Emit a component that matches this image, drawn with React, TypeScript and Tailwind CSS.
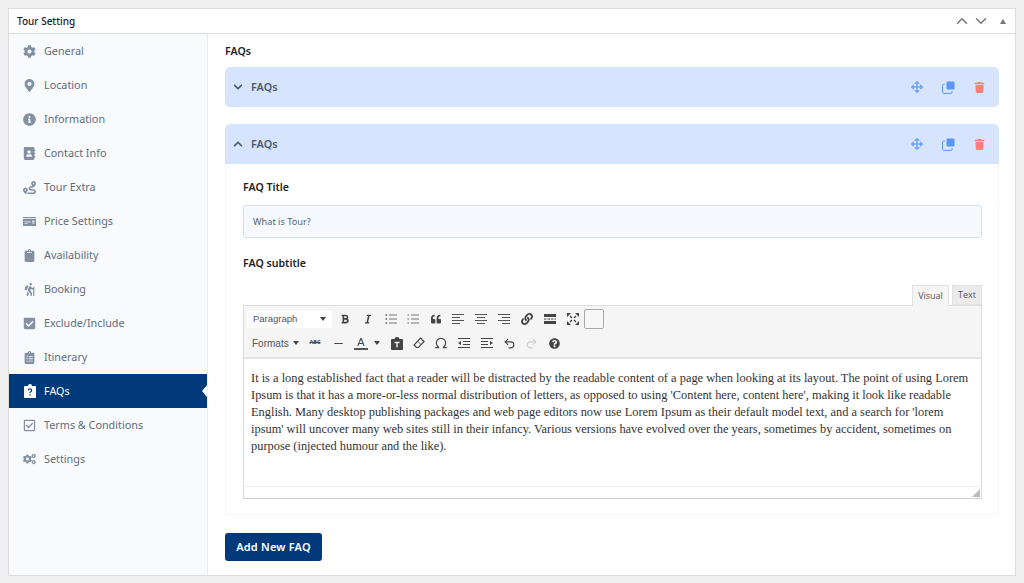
import React from "react";
import {
  FaCog, FaMapMarkerAlt, FaInfoCircle, FaAddressBook, FaMoneyCheck, FaClipboard, FaHiking,
  FaCheckSquare, FaClipboardList, FaRegCheckSquare, FaCogs, FaArrowsAlt, FaTrash, FaRoute,
  FaChevronDown, FaChevronUp, FaBold, FaItalic, FaQuoteLeft, FaLink, FaQuestionCircle,
} from "react-icons/fa";
import { ChevronUp, ChevronDown, Undo2, Redo2, Minus, Omega } from "lucide-react";

function FaqIcon() {
  return (
    <svg width="12" height="14" viewBox="0 0 12 14">
      <path d="M1.500 2H4a2 2 0 0 1 4 0h2.500A1.200 1.200 0 0 1 12 3.200v9.600a1.200 1.200 0 0 1-1.500 1.200h-9A1.200 1.200 0 0 1 0 12.800V3.200A1.200 1.200 0 0 1 1.500 2z" fill="#fff" />
      <path d="M4.400 6.400a1.600 1.600 0 1 1 2.400 1.400c-.6.4-.8.6-.8 1.200M6 10.200v1.200" fill="none" stroke="#013a76" strokeWidth="1.2" />
    </svg>
  );
}

const nav: [string, React.ReactNode][] = [
  ["General", <FaCog size={13} />],
  ["Location", <FaMapMarkerAlt size={13} />],
  ["Information", <FaInfoCircle size={13} />],
  ["Contact Info", <FaAddressBook size={13} />],
  ["Tour Extra", <FaRoute size={13} />],
  ["Price Settings", <FaMoneyCheck size={13} />],
  ["Availability", <FaClipboard size={13} />],
  ["Booking", <FaHiking size={13} />],
  ["Exclude/Include", <FaCheckSquare size={13} />],
  ["Itinerary", <FaClipboardList size={13} />],
  ["FAQs", <FaqIcon />],
  ["Terms & Conditions", <FaRegCheckSquare size={13} />],
  ["Settings", <FaCogs size={14} />],
];

function CopyIcon() {
  return (
    <svg width="13" height="13" viewBox="0 0 13 13">
      <rect x="4.500" y="0.500" width="8" height="8" rx="1" fill="#5b96f7" />
      <path d="M2.800 3.200H1.600a1 1 0 0 0-1 1v7.200a1 1 0 0 0 1 1H9a1 1 0 0 0 1-1v-1.200" fill="none" stroke="#5b96f7" strokeWidth="1" />
    </svg>
  );
}

function Lines({ kind }: { kind: "ul" | "ol" | "l" | "c" | "r" }) {
  if (kind === "ul" || kind === "ol") {
    return (
      <svg width="12" height="12" viewBox="0 0 12 12" stroke="#666" fill="none">
        {[2, 6, 10].map((y) => (
          <g key={y}>
            <path d={`M4 ${y}h8`} strokeWidth="0.9" />
            <path d={`M0.500 ${y}h1.600`} strokeWidth={kind === "ul" ? 1.6 : 1} />
          </g>
        ))}
      </svg>
    );
  }
  const rows =
    kind === "l"
      ? ["M0 1.500h12", "M0 4.500h8", "M0 7.500h12", "M0 10.500h8"]
      : kind === "c"
      ? ["M0 1.500h12", "M2 4.500h8", "M0 7.500h12", "M2 10.500h8"]
      : ["M0 1.500h12", "M4 4.500h8", "M0 7.500h12", "M4 10.500h8"];
  return (
    <svg width="12" height="12" viewBox="0 0 12 12" stroke="#555" fill="none" strokeWidth="1">
      {rows.map((d) => (
        <path key={d} d={d} />
      ))}
    </svg>
  );
}

function Indent({ flip }: { flip?: boolean }) {
  return (
    <svg width="12" height="12" viewBox="0 0 12 12" stroke="#444" fill="none" strokeWidth="1">
      <path d="M0 1.500h12M0 10.500h12" />
      {flip ? <path d="M0 4.500h7M0 7.500h7" /> : <path d="M5 4.500h7M5 7.500h7" />}
      {flip ? <path d="M9 4l3 2-3 2z" fill="#444" stroke="none" /> : <path d="M3 4L0 6l3 2z" fill="#444" stroke="none" />}
    </svg>
  );
}

function Tb({ w, children }: { w: string; children: React.ReactNode }) {
  return <span className={`flex h-5 shrink-0 items-center justify-center text-[#444] ${w}`}>{children}</span>;
}

function Caret() {
  return <span className="h-0 w-0 border-x-[3px] border-t-[4px] border-x-transparent border-t-[#444]" />;
}

function AccordionHead({ open }: { open?: boolean }) {
  return (
    <div className={`flex h-10 items-center bg-[#d6e4fd] pl-[4px] pr-[14px] ${open ? "rounded-t-[5px]" : "rounded-[5px]"}`}>
      <span className="flex w-[18px] justify-center text-[#4b5a6e]">
        {open ? <FaChevronUp size={10} /> : <FaChevronDown size={10} />}
      </span>
      <span className="ml-[4px] text-[10.8px] font-semibold text-[#4b5a6e]">FAQs</span>
      <span className="ml-auto flex items-center gap-[19px]">
        <FaArrowsAlt size={12} className="text-[#6ea3f8]" />
        <CopyIcon />
        <FaTrash size={11} className="text-[#f97f7a]" />
      </span>
    </div>
  );
}

export default function App() {
  return (
    <div className="h-[583px] w-[1024px] overflow-hidden bg-[#f0f0f1] px-2 pt-[8px] font-['Noto_Sans','Open_Sans',sans-serif]">
      <div className="h-[568px] border border-[#dcdcde] bg-white">
        <div className="flex h-[25px] items-center border-b border-[#dcdcde] pl-2 pr-[9px]">
          <span className="text-[10px] font-medium text-[#1d2327]">Tour Setting</span>
          <span className="ml-auto flex items-center gap-[1px] text-[#72777c]">
            <ChevronUp size={18} strokeWidth={2} />
            <ChevronDown size={18} strokeWidth={2} />
            <span className="ml-[9px] h-0 w-0 border-x-[3.5px] border-b-[5px] border-x-transparent border-b-[#72777c]" />
          </span>
        </div>
        <div className="flex h-[541px]">
          <aside className="w-[199px] shrink-0 border-r border-[#e8edf3] bg-[#f8fafc]">
            {nav.map(([label, icon]) => {
              const active = label === "FAQs";
              return (
                <div
                  key={label}
                  className={`relative flex h-[34px] items-center pl-[14px] text-[10.8px] ${
                    active ? "bg-[#003a7a] text-white" : "text-[#5f6d80]"
                  }`}
                >
                  <span className={`flex w-[13px] justify-center ${active ? "text-white" : "text-[#8390a2]"}`}>{icon}</span>
                  <span className="ml-[8px]">{label}</span>
                  {active && (
                    <span className="absolute right-0 top-[11px] h-0 w-0 border-y-[6px] border-r-[5px] border-y-transparent border-r-white" />
                  )}
                </div>
              );
            })}
          </aside>
          <main className="flex-1 pl-[17px] pr-[16px] pt-[10px]">
            <h2 className="h-[15px] text-[10.6px] font-semibold leading-[15px] text-[#1d2327]">FAQs</h2>
            <div className="mt-[8px]">
              <AccordionHead />
            </div>
            <div className="mt-[17px]">
              <AccordionHead open />
              <div className="h-[351px] rounded-b-[5px] border border-t-0 border-[#f5f5f5] pl-[17px] pr-[16px] pt-[16px]">
                <label className="block h-[15px] text-[10.6px] font-semibold leading-[15px] text-[#1d2327]">FAQ Title</label>
                <div className="mt-[10px] flex h-[33px] items-center rounded-[3px] border border-[#d5e0ee] bg-[#f6f9fe] px-[9px] text-[9.2px] text-[#5a6472]">
                  What is Tour?
                </div>
                <label className="mt-[18px] block h-[15px] text-[10.6px] font-semibold leading-[15px] text-[#1d2327]">FAQ subtitle</label>
                <div className="mt-[14px] flex h-[20px] justify-end gap-[3px] font-['Open_Sans',sans-serif] text-[9px] text-[#555]">
                  <span className="z-10 -mb-px flex w-[37px] items-center justify-center border border-b-0 border-[#e2e2e2] bg-[#f5f5f5]">Visual</span>
                  <span className="flex w-[30px] items-center justify-center border border-[#e2e2e2] bg-[#ebebeb]">Text</span>
                </div>
                <div className="border border-[#dddddd] border-b-[#cfcfcf]">
                  <div className="h-[53px] border-b-2 border-[#e4e4e4] bg-[#f5f5f5] pl-[3px] pt-[2px]">
                    <div className="flex h-[22px] items-center">
                      <span className="flex h-[17px] w-[85px] items-center justify-between bg-white px-[6px] font-['Liberation_Sans',sans-serif] text-[9.5px] text-[#555]">
                        Paragraph <Caret />
                      </span>
                      <div className="ml-[1px] flex items-center">
                        <Tb w="w-[24px]"><FaBold size={10} /></Tb>
                        <Tb w="w-[22px]"><FaItalic size={10} /></Tb>
                        <Tb w="w-[23px]"><Lines kind="ul" /></Tb>
                        <Tb w="w-[22px]"><Lines kind="ol" /></Tb>
                        <Tb w="w-[23px]"><FaQuoteLeft size={10} /></Tb>
                        <Tb w="w-[22px]"><Lines kind="l" /></Tb>
                        <Tb w="w-[23px]"><Lines kind="c" /></Tb>
                        <Tb w="w-[23px]"><Lines kind="r" /></Tb>
                        <Tb w="w-[24px]"><FaLink size={12} /></Tb>
                        <Tb w="w-[22px]">
                          <svg width="12" height="10" viewBox="0 0 12 10" fill="#444">
                            <path d="M0 0h12v3H0zM0 7h12v3H0zM0 4.500h2.500v1H0zM3.500 4.500h2.500v1H3.500zM7 4.500h2.500v1H7zM10.500 4.500H12v1h-1.500z" />
                          </svg>
                        </Tb>
                        <Tb w="w-[23px]">
                          <svg width="12" height="12" viewBox="0 0 12 12" fill="#444" stroke="#444" strokeWidth="1.300">
                            <path d="M3 3l2 2M9 3L7 5M3 9l2-2M9 9L7 7" fill="none" />
                            <path d="M0 0h4L0 4zM12 0H8l4 4zM0 12h4l-4-4zM12 12H8l4-4z" stroke="none" />
                          </svg>
                        </Tb>
                        <span className="h-5 w-5 rounded-[2px] border border-[#aaa] bg-[#f7f7f7]" />
                      </div>
                    </div>
                    <div className="mt-[3px] flex h-5 items-center pl-[5px]">
                      <span className="flex w-[53px] shrink-0 items-center gap-[4px] font-['Liberation_Sans',sans-serif] text-[10px] text-[#555]">
                        Formats <Caret />
                      </span>
                      <Tb w="w-[20px]"><span className="text-[5.5px] font-bold leading-none line-through">ABC</span></Tb>
                      <Tb w="w-[26px]"><Minus size={13} /></Tb>
                      <span className="flex h-5 w-[20px] shrink-0 flex-col items-center justify-center font-['Liberation_Sans',sans-serif] text-[11px] leading-[11px] text-[#444]">
                        A<span className="h-[2px] w-[14px] bg-[#555]" />
                      </span>
                      <span className="ml-[2px] mr-[5px] flex w-[8px] justify-center"><Caret /></span>
                      <Tb w="w-[22px]">
                        <svg width="12" height="13" viewBox="0 0 12 13">
                          <path d="M1 2h2.500a2.500 2 0 0 1 5 0H11a1 1 0 0 1 1 1v9a1 1 0 0 1-1 1H1a1 1 0 0 1-1-1V3a1 1 0 0 1 1-1z" fill="#444" />
                          <path d="M3.500 5.500h5M6 5.500v5" stroke="#f5f5f5" strokeWidth="1.300" fill="none" />
                        </svg>
                      </Tb>
                      <Tb w="w-[22px]">
                        <svg width="12" height="12" viewBox="0 0 12 12" fill="none" stroke="#444" strokeWidth="1.200">
                          <path d="M7.500 1L11 4.500 5.500 10.500H3.500L1 8z" />
                          <path d="M4.500 4l4 4" strokeWidth="0.800" />
                        </svg>
                      </Tb>
                      <Tb w="w-[22px]"><Omega size={14} strokeWidth={2} /></Tb>
                      <Tb w="w-[23px]"><Indent /></Tb>
                      <Tb w="w-[23px]"><Indent flip /></Tb>
                      <Tb w="w-[22px]"><Undo2 size={13} strokeWidth={2} /></Tb>
                      <Tb w="w-[22px]"><Redo2 size={13} strokeWidth={1.5} className="text-[#bbb]" /></Tb>
                      <Tb w="w-[24px]"><FaQuestionCircle size={11} /></Tb>
                    </div>
                  </div>
                  <div className="h-[127px] px-[7px] pt-[11px] font-['Liberation_Serif',serif] text-[12.4px] leading-[17px] text-[#333]">
                    It is a long established fact that a reader will be distracted by the readable content of a page when looking at its layout. The point of using Lorem Ipsum is that it has a more-or-less normal distribution of letters, as opposed to using 'Content here, content here', making it look like readable English. Many desktop publishing packages and web page editors now use Lorem Ipsum as their default model text, and a search for 'lorem ipsum' will uncover many web sites still in their infancy. Various versions have evolved over the years, sometimes by accident, sometimes on purpose (injected humour and the like).
                  </div>
                  <div className="relative h-[12px] border-t border-[#eeeeee]">
                    <svg width="8" height="8" viewBox="0 0 8 8" className="absolute bottom-[1px] right-[1px]">
                      <path d="M8 0v8H0z" fill="#bbb" />
                    </svg>
                  </div>
                </div>
              </div>
            </div>
            <button className="mt-[18px] flex h-[28px] w-[97px] items-center justify-center rounded-[3px] bg-[#003a7a] text-[11px] font-semibold tracking-[0.2px] text-white">
              Add New FAQ
            </button>
          </main>
        </div>
      </div>
    </div>
  );
}
